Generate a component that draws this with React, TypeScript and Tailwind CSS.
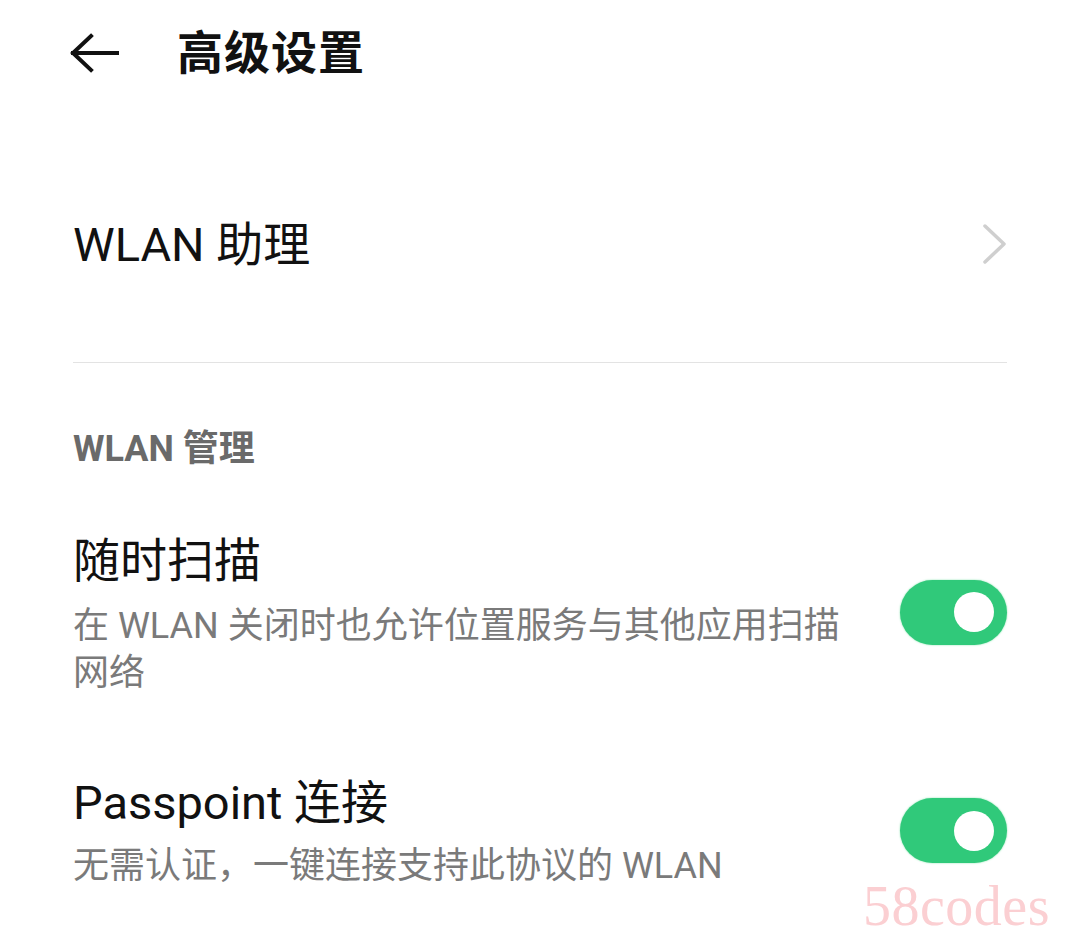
import React from "react";

function Toggle() {
  return (
    <div className="relative h-[65px] w-[107px] shrink-0 rounded-full bg-[#30c97a] shadow-[0_0_2px_#7fe0a8]">
      <div className="absolute right-[13px] top-[12.5px] h-[40px] w-[40px] rounded-full bg-white" />
    </div>
  );
}

export default function App() {
  const font = { fontFamily: 'Roboto, "Noto Sans CJK SC", sans-serif' };
  return (
    <div className="relative h-[941px] w-[1065px] overflow-hidden bg-white text-[#111]" style={font}>
      <div className="flex h-[106px] items-center pl-[70px]">
        <svg width="50" height="40" viewBox="0 0 50 40" className="shrink-0">
          <path d="M47 20H3M21 3L3 20L21 37" fill="none" stroke="#111" strokeWidth="4" strokeLinecap="square" strokeLinejoin="miter" />
        </svg>
        <div className="ml-[57px] text-[46px] font-bold leading-none tracking-[1px]">高级设置</div>
      </div>

      <div className="mt-[93px] flex h-[90px] items-center justify-between pl-[73px] pr-[57px]">
        <div className="text-[47px] leading-none">WLAN 助理</div>
        <svg width="26" height="42" viewBox="0 0 26 42">
          <path d="M3 3L22 21L3 39" fill="none" stroke="#cfcfcf" strokeWidth="3.5" strokeLinecap="round" strokeLinejoin="round" />
        </svg>
      </div>

      <div className="ml-[73px] mr-[58px] mt-[73px] h-px bg-[#e3e3e3]" />

      <div className="ml-[73px] mt-[66px] h-[40px] text-[36px] font-bold leading-[40px] text-[#6a6a6a]">WLAN 管理</div>

      <div className="mt-[64px] flex items-center justify-between pl-[73px] pr-[58px]">
        <div className="w-[790px]">
          <div className="text-[47px] leading-[56px]">随时扫描</div>
          <div className="mt-[14px] text-[36px] leading-[47px] text-[#7a7a7a]">
            在 WLAN 关闭时也允许位置服务与其他应用扫描网络
          </div>
        </div>
        <div className="-translate-y-[3px]">
          <Toggle />
        </div>
      </div>

      <div className="mt-[78px] flex items-center justify-between pl-[73px] pr-[58px]">
        <div className="w-[790px]">
          <div className="text-[47px] leading-[56px]">Passpoint 连接</div>
          <div className="mt-[12px] text-[36px] leading-[47px] text-[#7a7a7a]">
            无需认证，一键连接支持此协议的 WLAN
          </div>
        </div>
        <div className="-translate-y-[2px]">
          <Toggle />
        </div>
      </div>

      <div
        className="absolute right-[15px] top-[878px] text-[56px] font-light leading-none text-[#fbcfd2]"
        style={{ fontFamily: '"Liberation Serif", serif', letterSpacing: "0.5px" }}
      >
        58codes
      </div>
    </div>
  );
}
